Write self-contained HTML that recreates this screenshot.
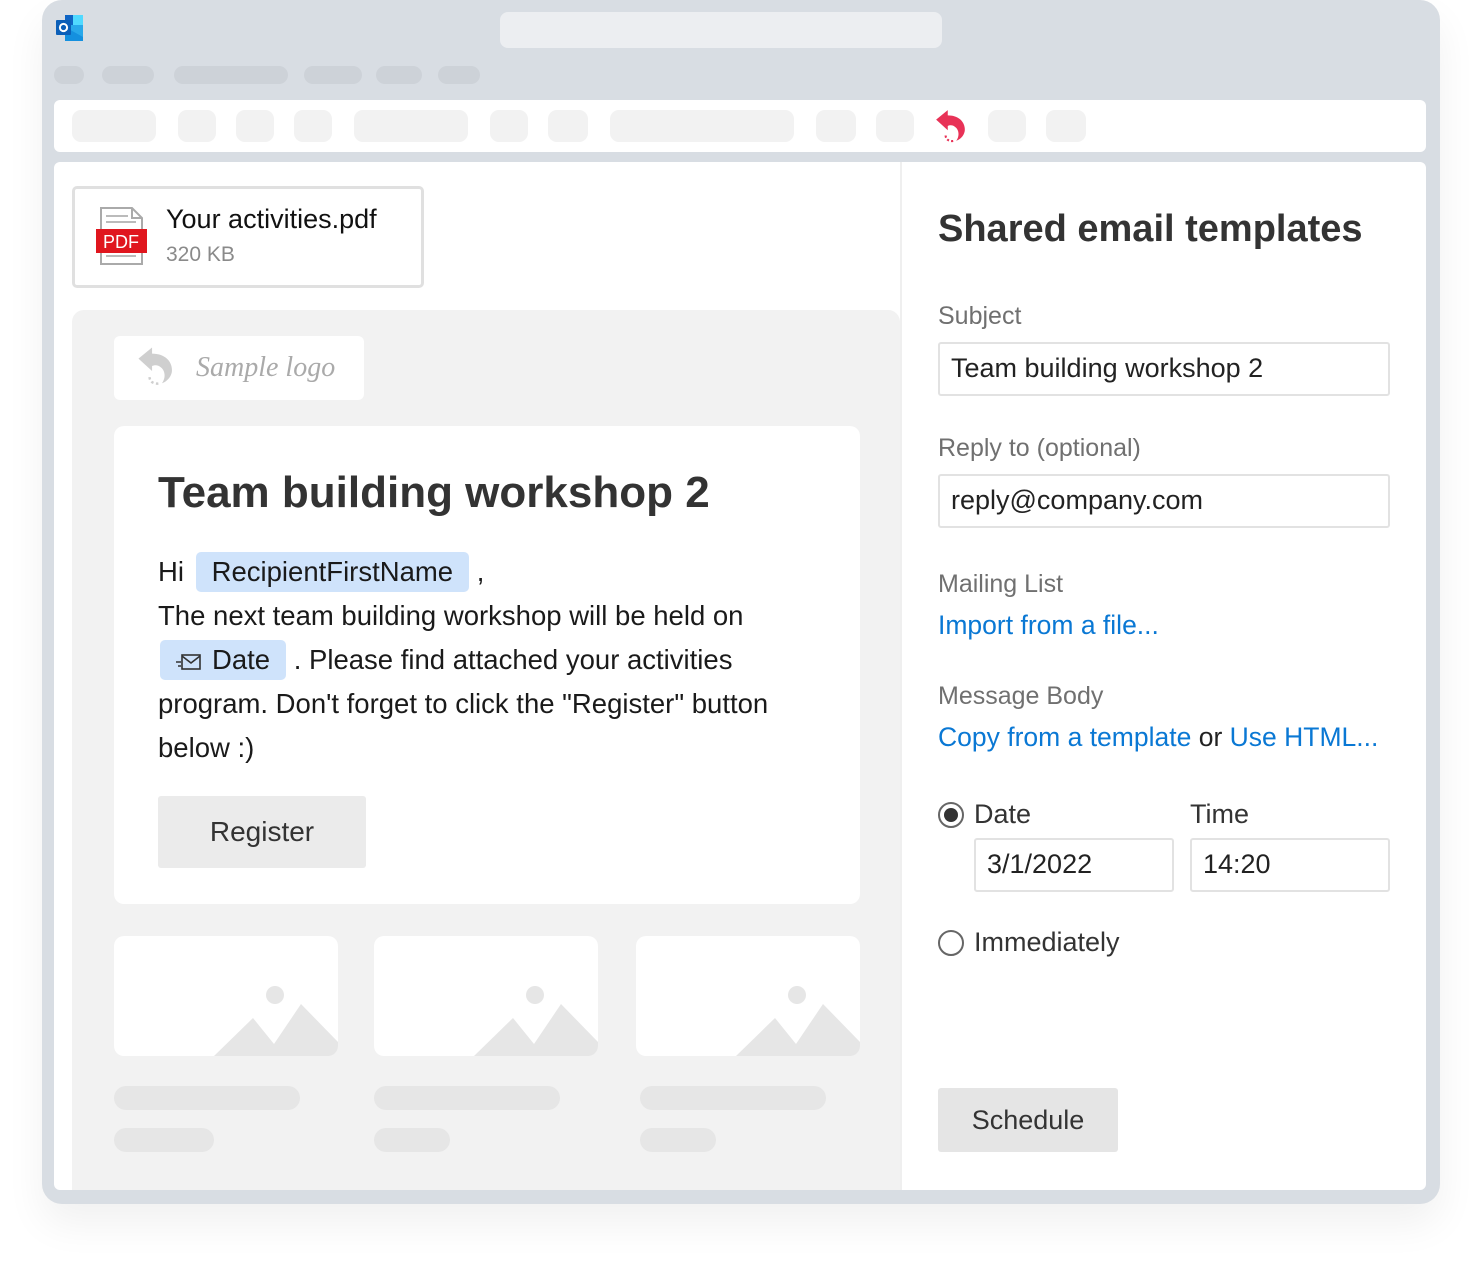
<!DOCTYPE html>
<html><head><meta charset="utf-8"><style>
*{margin:0;padding:0;box-sizing:border-box}
body{width:1480px;height:1262px;background:#fff;position:relative;overflow:hidden;font-family:"Liberation Sans",sans-serif;color:#222}
.a{position:absolute}
.frame{left:42px;top:0;width:1398px;height:1204px;background:#d8dde3;border-radius:20px;box-shadow:0 20px 40px rgba(0,0,0,0.06)}
.pill{background:#cdd2d8;border-radius:9px;height:18px;top:66px}
.tb{background:#f2f2f2;border-radius:9px;height:32px;top:110px}
.t{white-space:nowrap}
.lbl{font-size:25px;color:#707070}
.inp{border:2px solid #e2e2e2;border-radius:3px;background:#fff;height:54px;font-size:27px;color:#222;padding:9px 0 0 11px;white-space:nowrap}
.link{color:#0a78d4}
.chip{background:#cfe3fb;border-radius:5px}
.img{background:#fff;border-radius:10px;width:224px;height:120px;top:936px;overflow:hidden}
.bar{background:#e6e6e6;border-radius:12px;height:24px}
</style></head><body>
<div class="a frame"></div>
<svg class="a" style="left:55px;top:14px" width="30" height="28" viewBox="0 0 30 28">
<rect x="10" y="1" width="18" height="10" fill="#0f64c4"/><rect x="10" y="11" width="18" height="16" fill="#28a8ea"/><rect x="18" y="1" width="10" height="10" fill="#50d9ff"/>
<path d="M10 13 L28 23 L28 27 L10 27Z" fill="#1490df"/>
<rect x="1" y="6" width="15" height="15" rx="1" fill="#0c5fb8"/>
<circle cx="8.5" cy="13.5" r="3.6" fill="none" stroke="#fff" stroke-width="2"/></svg>
<div class="a" style="left:500px;top:12px;width:442px;height:36px;background:#eceef1;border-radius:8px"></div>
<div class="a pill" style="left:54px;width:30px"></div>
<div class="a pill" style="left:102px;width:52px"></div>
<div class="a pill" style="left:174px;width:114px"></div>
<div class="a pill" style="left:304px;width:58px"></div>
<div class="a pill" style="left:376px;width:46px"></div>
<div class="a pill" style="left:438px;width:42px"></div>
<div class="a" style="left:54px;top:100px;width:1372px;height:52px;background:#fff;border-radius:6px"></div>
<div class="a tb" style="left:72px;width:84px"></div>
<div class="a tb" style="left:178px;width:38px"></div>
<div class="a tb" style="left:236px;width:38px"></div>
<div class="a tb" style="left:294px;width:38px"></div>
<div class="a tb" style="left:354px;width:114px"></div>
<div class="a tb" style="left:490px;width:38px"></div>
<div class="a tb" style="left:548px;width:40px"></div>
<div class="a tb" style="left:610px;width:184px"></div>
<div class="a tb" style="left:816px;width:40px"></div>
<div class="a tb" style="left:876px;width:38px"></div>
<div class="a tb" style="left:988px;width:38px"></div>
<div class="a tb" style="left:1046px;width:40px"></div>
<svg class="a" style="left:934px;top:108px" width="36" height="36" viewBox="0 0 34 34">
<path d="M2 11 L13 2 L13 7 C24 7 30 14 29 22 C28 27 24 30 21 31 C24 27 24 21 20 18 C18 16 15 16 13 17 L13 21 Z" fill="#e83257"/>
<path d="M11 26 C11 30 15 32 19 31" fill="none" stroke="#e83257" stroke-width="2" stroke-dasharray="2 2"/></svg>
<div class="a" style="left:54px;top:162px;width:1372px;height:1028px;background:#fff;border-radius:6px"></div>
<div class="a" style="left:900px;top:162px;width:2px;height:1028px;background:#efefef"></div>
<div class="a" style="left:72px;top:186px;width:352px;height:102px;border:3px solid #e0e0e0;border-radius:5px;background:#fff"></div>
<svg class="a" style="left:96px;top:206px" width="54" height="60" viewBox="0 0 54 60">
<path d="M5 2 H36 L46 12 V58 H5 Z" fill="#fff" stroke="#aaa" stroke-width="2"/>
<path d="M36 2 V12 H46" fill="none" stroke="#aaa" stroke-width="2"/>
<g stroke="#bbb" stroke-width="2"><line x1="10" y1="10" x2="32" y2="10"/><line x1="10" y1="16" x2="40" y2="16"/><line x1="10" y1="50" x2="40" y2="50"/></g>
<rect x="0" y="23" width="51" height="24" fill="#e0161e"/>
<text x="25" y="42" font-family="Liberation Sans" font-size="18" fill="#fff" text-anchor="middle">PDF</text></svg>
<div class="a t" style="left:166px;top:204px;font-size:27px;color:#111">Your activities.pdf</div>
<div class="a t" style="left:166px;top:243px;font-size:21px;color:#8a8a8a">320 KB</div>
<div class="a" style="left:72px;top:310px;width:828px;height:880px;background:#f2f2f2;border-radius:12px 12px 0 0"></div>
<div class="a" style="left:114px;top:336px;width:250px;height:64px;background:#fff;border-radius:6px"></div>
<svg class="a" style="left:136px;top:344px" width="42" height="44" viewBox="0 0 34 34">
<path d="M2 11 L13 2 L13 7 C24 7 30 14 29 22 C28 27 24 30 21 31 C24 27 24 21 20 18 C18 16 15 16 13 17 L13 21 Z" fill="#cfcfcf"/>
<path d="M11 26 C11 30 15 32 19 31" fill="none" stroke="#cfcfcf" stroke-width="2" stroke-dasharray="2 2"/></svg>
<div class="a t" style="left:196px;top:352px;font-family:'Liberation Serif',serif;font-style:italic;font-size:28px;color:#aaa">Sample logo</div>
<div class="a" style="left:114px;top:426px;width:746px;height:478px;background:#fff;border-radius:10px"></div>
<div class="a t" style="left:158px;top:468px;font-size:44px;font-weight:bold;color:#333">Team building workshop 2</div>
<div class="a" style="left:158px;top:550px;font-size:27.5px;color:#1a1a1a;line-height:44px;width:700px">
<div class="t">Hi <span class="chip" style="display:inline-block;padding:0 16px;line-height:40px;margin-left:4px">RecipientFirstName</span> ,</div>
<div class="t">The next team building workshop will be held on</div>
<div class="t"><span class="chip" style="display:inline-block;padding:0 16px;line-height:40px;margin-left:2px"><svg width="26" height="18" viewBox="0 0 26 18" style="vertical-align:-2px;margin-right:10px"><rect x="6" y="2" width="18" height="14" fill="none" stroke="#333" stroke-width="1.6"/><path d="M6 3 L15 10 L24 3" fill="none" stroke="#333" stroke-width="1.6"/><line x1="0" y1="9" x2="5" y2="9" stroke="#333" stroke-width="1.5"/><line x1="2" y1="13" x2="5" y2="13" stroke="#333" stroke-width="1.5"/></svg>Date</span> . Please find attached your activities</div>
<div class="t">program. Don't forget to click the "Register" button</div>
<div class="t">below :)</div>
</div>
<div class="a" style="left:158px;top:796px;width:208px;height:72px;background:#ebebeb;border-radius:3px;font-size:28px;color:#333;text-align:center;line-height:72px">Register</div>
<div class="a img" style="left:114px"><svg width="224" height="120"><circle cx="161" cy="59" r="9" fill="#e6e6e6"/><path d="M100 120 L139 82 L160 108 L187 68 L224 106 L224 120Z" fill="#e6e6e6"/></svg></div>
<div class="a img" style="left:374px"><svg width="224" height="120"><circle cx="161" cy="59" r="9" fill="#e6e6e6"/><path d="M100 120 L139 82 L160 108 L187 68 L224 106 L224 120Z" fill="#e6e6e6"/></svg></div>
<div class="a img" style="left:636px"><svg width="224" height="120"><circle cx="161" cy="59" r="9" fill="#e6e6e6"/><path d="M100 120 L139 82 L160 108 L187 68 L224 106 L224 120Z" fill="#e6e6e6"/></svg></div>
<div class="a bar" style="left:114px;top:1086px;width:186px"></div>
<div class="a bar" style="left:114px;top:1128px;width:100px"></div>
<div class="a bar" style="left:374px;top:1086px;width:186px"></div>
<div class="a bar" style="left:374px;top:1128px;width:76px"></div>
<div class="a bar" style="left:640px;top:1086px;width:186px"></div>
<div class="a bar" style="left:640px;top:1128px;width:76px"></div>
<div class="a t" style="left:938px;top:208px;font-size:38px;font-weight:bold;color:#333">Shared email templates</div>
<div class="a t lbl" style="left:938px;top:302px">Subject</div>
<div class="a inp" style="left:938px;top:342px;width:452px">Team building workshop 2</div>
<div class="a t lbl" style="left:938px;top:434px">Reply to (optional)</div>
<div class="a inp" style="left:938px;top:474px;width:452px">reply@company.com</div>
<div class="a t lbl" style="left:938px;top:570px">Mailing List</div>
<div class="a t link" style="left:938px;top:610px;font-size:26.5px">Import from a file...</div>
<div class="a t lbl" style="left:938px;top:682px">Message Body</div>
<div class="a t" style="left:938px;top:722px;font-size:26.5px"><span class="link">Copy from a template</span> or <span class="link">Use HTML...</span></div>
<div class="a" style="left:938px;top:802px;width:26px;height:26px;border:2px solid #666;border-radius:50%"></div>
<div class="a" style="left:944px;top:808px;width:14px;height:14px;background:#333;border-radius:50%"></div>
<div class="a t" style="left:974px;top:799px;font-size:27px;color:#333">Date</div>
<div class="a t" style="left:1190px;top:799px;font-size:27px;color:#333">Time</div>
<div class="a inp" style="left:974px;top:838px;width:200px">3/1/2022</div>
<div class="a inp" style="left:1190px;top:838px;width:200px">14:20</div>
<div class="a" style="left:938px;top:930px;width:26px;height:26px;border:2px solid #666;border-radius:50%"></div>
<div class="a t" style="left:974px;top:927px;font-size:27px;color:#333">Immediately</div>
<div class="a" style="left:938px;top:1088px;width:180px;height:64px;background:#e5e5e5;border-radius:3px;font-size:27px;color:#333;text-align:center;line-height:64px">Schedule</div>
</body></html>
